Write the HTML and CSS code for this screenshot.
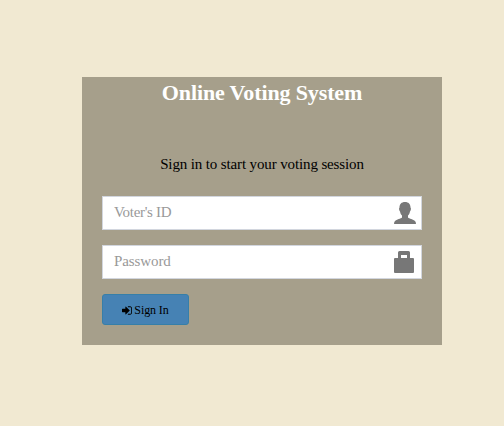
FILE: index.html
```html
<!DOCTYPE html>
<html lang="en">
<head>
<meta charset="utf-8">
<title>Online Voting System</title>
<link rel="stylesheet" href="styles.css">
</head>
<body>
<main class="login-box">
  <h1 class="login-logo">Online Voting System</h1>
  <div class="login-body">
    <p class="login-msg">Sign in to start your voting session</p>
    <form>
      <div class="field">
        <input class="voter" type="text" placeholder="Voter's ID">
        <svg class="icon" viewBox="0 0 24 24"><path d="M12 1C8.500 1 6.500 3.200 6.500 6.500C5.700 7 6 9.500 7 10.500C7.400 12.500 8 13.500 9 14.500V16.500C8 17.500 3.500 18.500 2 20Q1 21 1 23H23Q23 21 22 20C20.500 18.500 16 17.500 15 16.500V14.500C16 13.500 16.600 12.500 17 10.500C18 9.500 18.300 7 17.500 6.500C17.500 3.200 15.500 1 12 1Z"/></svg>
      </div>
      <div class="field">
        <input type="password" placeholder="Password">
        <svg class="icon" viewBox="0 0 24 24"><path fill-rule="evenodd" d="M5 8V2.500Q5 1 6.500 1H15.500Q17 1 17 2.500V8H20Q21 8 21 9V22Q21 23 20 23H2Q1 23 1 22V9Q1 8 2 8ZM8 8H14V5H8Z"/></svg>
      </div>
      <button type="submit" class="btn"><svg class="btn-icon" viewBox="0 0 1536 1536"><path d="M1184 768q0 26-19 45l-544 544q-19 19-45 19t-45-19-19-45v-288H64q-26 0-45-19T0 960V576q0-26 19-45t45-19h448V224q0-26 19-45t45-19 45 19l544 544q19 19 19 45zm352-352v704q0 119-84.500 203.500T1248 1408H928q-13 0-22.500-9.500T896 1376q0-4-1-20t-.5-26.500 3-23.500 10-19.500T928 1280h320q66 0 113-47t47-113V416q0-66-47-113t-113-47H936q-11 0-24-5t-15-27q-1-14-1-32 0-24 3-43t29-20h320q119 0 203.500 84.500T1536 416z"/></svg> Sign In</button>
    </form>
  </div>
</main>
</body>
</html>
```
FILE: styles.css
```css
* { box-sizing: border-box; }
body { margin: 0; background: #f1e9d2; font-family: "Liberation Serif", serif; font-size: 15px; line-height: 20px; color: #000; overflow: hidden; }
.login-box { width: 360px; height: 268px; margin: 77px 0 0 82px; background: #a69f8b; }
.login-logo { margin: 0; font-size: 22px; line-height: 32px; font-weight: bold; letter-spacing: -0.13px; text-align: center; color: #fff; }
.login-body { padding: 45px 20px 20px; }
.login-msg { margin: 0 0 22px; letter-spacing: -0.13px; text-align: center; }
.field { position: relative; height: 34px; margin-bottom: 15px; }
.field input { display: block; width: 100%; height: 34px; padding: 5px 42px 7px 11px; border: 1px solid #d2d6de; border-radius: 0; background: #fff; font: inherit; letter-spacing: -0.1px; }
.field .voter { letter-spacing: -0.3px; }
.field input::placeholder { color: #999; opacity: 1; }
.icon { position: absolute; right: 5px; top: 5px; width: 24px; height: 24px; fill: #777; }
.btn { display: flex; align-items: center; justify-content: center; gap: 2px; width: 87px; height: 31px; padding: 1px 0 0; border: 1px solid #367fa9; border-radius: 3px; background: #4682b4; font: 12px "Liberation Serif", serif; letter-spacing: -0.1px; color: #000; }
.btn-icon { width: 10px; height: 11px; fill: #000; }
```
